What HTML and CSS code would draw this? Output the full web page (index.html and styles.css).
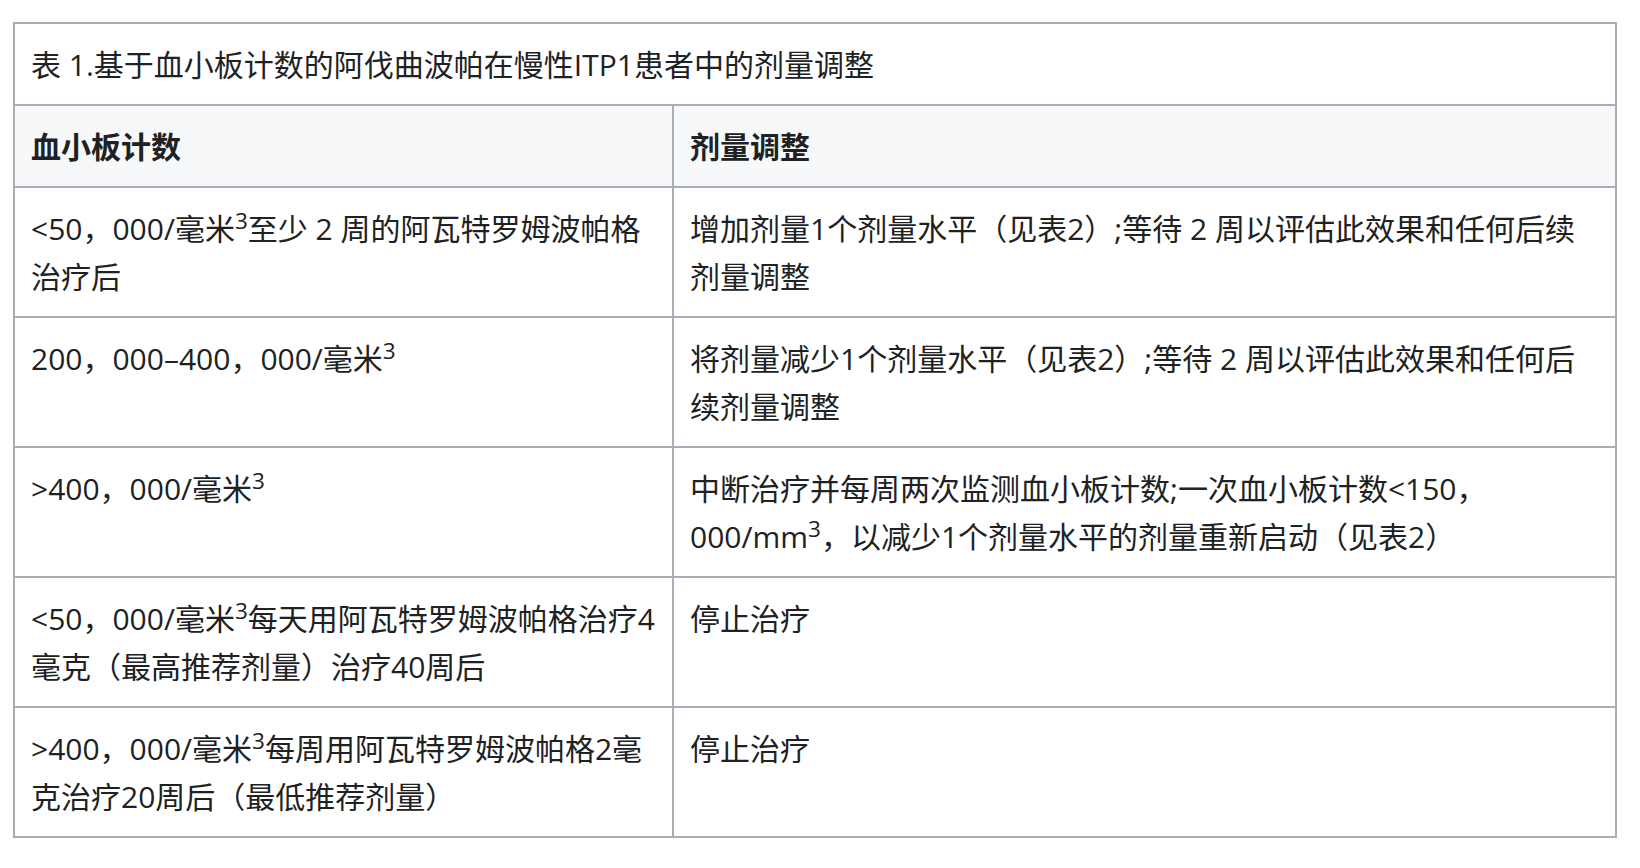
FILE: index.html
```html
<!DOCTYPE html>
<html lang="zh-CN">
<head>
<meta charset="utf-8">
<title>表 1</title>
<link rel="stylesheet" href="styles.css">
</head>
<body>
<table class="dose-table">
  <colgroup>
    <col class="col-count">
    <col class="col-adjust">
  </colgroup>
  <tbody>
    <tr>
      <td class="caption-cell" colspan="2">表 1.基于血小板计数的阿伐曲波帕在慢性ITP1患者中的剂量调整</td>
    </tr>
    <tr class="head-row">
      <th>血小板计数</th>
      <th>剂量调整</th>
    </tr>
    <tr>
      <td>&lt;50，000/毫米<sup>3</sup>至少 2 周的阿瓦特罗姆波帕格<br>治疗后</td>
      <td>增加剂量1个剂量水平（见表2）;等待 2 周以评估此效果和任何后续<br>剂量调整</td>
    </tr>
    <tr>
      <td>200，000–400，000/毫米<sup>3</sup></td>
      <td>将剂量减少1个剂量水平（见表2）;等待 2 周以评估此效果和任何后<br>续剂量调整</td>
    </tr>
    <tr>
      <td>&gt;400，000/毫米<sup>3</sup></td>
      <td>中断治疗并每周两次监测血小板计数;一次血小板计数&lt;150，<br>000/mm<sup>3</sup>，以减少1个剂量水平的剂量重新启动（见表2）</td>
    </tr>
    <tr>
      <td>&lt;50，000/毫米<sup>3</sup>每天用阿瓦特罗姆波帕格治疗4<br>毫克（最高推荐剂量）治疗40周后</td>
      <td>停止治疗</td>
    </tr>
    <tr>
      <td>&gt;400，000/毫米<sup>3</sup>每周用阿瓦特罗姆波帕格2毫<br>克治疗20周后（最低推荐剂量）</td>
      <td>停止治疗</td>
    </tr>
  </tbody>
</table>
</body>
</html>
```
FILE: styles.css
```css
html, body {
  margin: 0;
  padding: 0;
  background: #ffffff;
}

body {
  font-family: "Open Sans", "Noto Sans CJK SC", sans-serif;
  font-size: 30px;
  line-height: 48px;
  color: #202122;
}

.dose-table {
  margin: 22px 0 0 13px;
  width: 1604px;
  table-layout: fixed;
  border-collapse: collapse;
  border: 2px solid #a9adb8;
}

.col-count {
  width: 659px;
}

.dose-table td,
.dose-table th {
  border: 2px solid #a9adb8;
  padding: 17px 16px 15px;
  vertical-align: top;
  text-align: left;
  white-space: nowrap;
}

.caption-cell {
  background: #ffffff;
}

.head-row th {
  background: #f7f8fa;
  font-weight: 700;
}

sup {
  font-size: 0.75em;
  line-height: 0;
  vertical-align: 0.5em;
}
```
